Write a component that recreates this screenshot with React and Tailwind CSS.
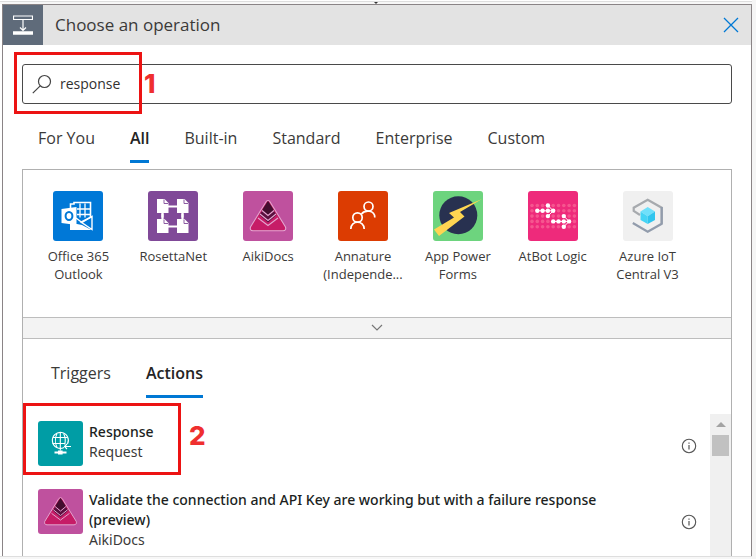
import React from "react";

function OutlookIcon() {
  return (
    <svg viewBox="0 0 50 50" className="size-full" aria-hidden="true">
      <rect width="50" height="50" fill="#0078d7" />
      <path d="M17.5 17V13h3.5v-1.5h16.5V26" fill="none" stroke="#fff" strokeWidth="1.6" />
      <path d="M24 18h13M24 23.5h13M27 12.5v14M32 12.5v14" stroke="#fff" strokeWidth="1.3" />
      <path d="M39 25.5v13L28 31z" fill="#0078d7" stroke="#fff" strokeWidth="1.4" />
      <path d="M17 33h7l5 1 9.500 5H17z" fill="#fff" />
      <path d="M23 27l6 4.500 10-6" fill="none" stroke="#fff" strokeWidth="1.400" />
      <path d="M8.500 18l15-2v18l-15-2z" fill="#fff" />
      <ellipse cx="16" cy="25" rx="3.400" ry="4" fill="none" stroke="#0078d7" strokeWidth="2" />
    </svg>
  );
}

function RosettaIcon() {
  return (
    <svg viewBox="0 0 50 50" className="size-full" aria-hidden="true">
      <rect width="50" height="50" fill="#804998" />
      <path d="M14.500 15.500h20v20h-20z" fill="none" stroke="#fff" strokeWidth="2.200" />
      {[[9, 8], [29, 8], [9, 28], [29, 28]].map(([x, y]) => (
        <g key={`${x}-${y}`}>
          <path d={`M${x} ${y}h7.500l4 4v10h-11.500z`} fill="#fff" />
          <path d={`M${x + 7} ${y + 0.5}v4h4`} fill="none" stroke="#804998" strokeWidth="0.9" />
        </g>
      ))}
      <path d="M14.500 22.500v4M34.500 22.500v4" stroke="#fff" strokeWidth="2.200" />
    </svg>
  );
}

function AikiIcon() {
  return (
    <svg viewBox="0 0 50 50" className="size-full" aria-hidden="true">
      <rect width="50" height="50" fill="#bf519e" />
      <path d="M23.200 10.500q1.800-2 3.600 0L42.500 36q1 3.500-2.500 3.800H10Q6.500 39.500 7.500 36z" fill="#c61c67" stroke="#e3a5cf" strokeWidth="1.100" />
      <path d="M25 10.300L33.500 24 25 31.500 16.500 24z" fill="#5b103f" />
      <path d="M25 10l5.500 8.500L25 23.500l-5.500-5z" fill="#430e2f" />
      <path d="M19 19.500l6 5 6-5M17 23l8 6.500 8-6.500M15 27l10 7.500L35 27" fill="none" stroke="#e3a5cf" strokeWidth="1.100" />
    </svg>
  );
}

function AnnatureIcon() {
  return (
    <svg viewBox="0 0 50 50" className="size-full" aria-hidden="true">
      <rect width="50" height="50" fill="#dc3c02" />
      <g fill="none" stroke="#fff" strokeWidth="1.700">
        <circle cx="30.500" cy="15.500" r="4.500" />
        <circle cx="19.500" cy="26.500" r="4.700" />
        <path d="M12.800 38c0-9 13.400-9 13.400 0M23.500 23c3-4 13.300-4.500 13.300 3.500" />
      </g>
    </svg>
  );
}

function PowerFormsIcon() {
  return (
    <svg viewBox="0 0 50 50" className="size-full" aria-hidden="true">
      <rect width="50" height="50" fill="#6dd47e" />
      <circle cx="25.300" cy="24.300" r="19" fill="#283150" />
      <path d="M49 8L16 22l5 4.500L1 38.500 6 45l25.500-19.500L27 21z" fill="#fed552" />
    </svg>
  );
}

const litDots = ["1-1", "2-1", "3-1", "4-1", "3-0", "3-2", "4-3", "5-3", "6-3", "7-3", "6-2", "6-4"];

function AtBotIcon() {
  const dots = [];
  for (let r = 0; r < 5; r++) for (let c = 0; c < 9; c++) dots.push([c, r]);
  return (
    <svg viewBox="0 0 50 50" className="size-full" aria-hidden="true">
      <rect width="50" height="50" fill="#ee2a7b" />
      {dots.map(([c, r]) => {
        const lit = litDots.includes(`${c}-${r}`);
        return (
          <circle key={`${c}-${r}`} cx={4 + c * 5.3} cy={14.5 + r * 5.3} r={lit ? 2.2 : 1.8} fill={lit ? "#fff" : "#f5568f"} />
        );
      })}
      <path d="M9.300 19.800h16M20 14.500l5.200 5.300-5.200 5.300M25.200 30.400h16M35.800 25.100l5.300 5.300-5.300 5.300" fill="none" stroke="#fff" strokeWidth="1" />
    </svg>
  );
}

function AzureIotIcon() {
  return (
    <svg viewBox="0 0 50 50" className="size-full" aria-hidden="true">
      <rect width="50" height="50" fill="#f0f0f0" />
      <path d="M17 24l-6.300-4v-3.300l14-8 14 8v16" fill="none" stroke="#a7aaae" strokeWidth="2.200" />
      <path d="M38.700 16v16.800l-14 8L9.800 32" fill="none" stroke="#929cac" strokeWidth="2.200" />
      <path d="M24.700 16l7.300 4.500-7.300 4.700-7.200-4.700z" fill="#6fe0fb" />
      <path d="M17.500 20.500l7.200 4.700V33l-7.200-4z" fill="#45d4f5" />
      <path d="M32 20.500l-7.300 4.700V33l7.300-4z" fill="#30c5ee" />
    </svg>
  );
}

function RequestIcon() {
  return (
    <svg viewBox="0 0 45 45" className="size-full" aria-hidden="true">
      <rect width="45" height="45" fill="#009da5" />
      <g fill="none" stroke="#fff" strokeWidth="1.100">
        <path d="M29.500 23A8 8 0 1 0 26 26.500" />
        <path d="M22.300 11.500v18M19 12.500c-2 4-2 10 0 14M25.600 12.500c2 4 2 8 1 11M15 16.500h14.500M14.500 22.500h13" />
        <path d="M33 25.500h-6.500M29 23l-2.500 2.500L29 28" />
        <path d="M16.500 31.500h12" strokeWidth="1.800" />
      </g>
      <path d="M20 29.500h4.600v4H20z" fill="#fff" />
    </svg>
  );
}

const categories = ["For You", "All", "Built-in", "Standard", "Enterprise", "Custom"];

const connectors = [
  ["Office 365 Outlook", OutlookIcon],
  ["RosettaNet", RosettaIcon],
  ["AikiDocs", AikiIcon],
  ["Annature (Independe...", AnnatureIcon],
  ["App Power Forms", PowerFormsIcon],
  ["AtBot Logic", AtBotIcon],
  ["Azure IoT Central V3", AzureIotIcon],
];

const actions = [
  ["Response", "Request", RequestIcon],
  ["Validate the connection and API Key are working but with a failure response (preview)", "AikiDocs", AikiIcon],
];

function Tab({ label, selected }) {
  return (
    <button
      type="button"
      role="tab"
      aria-selected={Boolean(selected)}
      className={
        selected
          ? "border-b-3 border-[#0078d4] pb-2 text-base leading-7 font-semibold whitespace-nowrap text-[#242424]"
          : "border-b-3 border-transparent pb-2 text-base leading-7 whitespace-nowrap text-[#3b3a39]"
      }
    >
      {label}
    </button>
  );
}

function ActionRow({ title, connector, Icon }) {
  return (
    <li className="flex gap-1.5 pt-[7px] pr-[13px] pb-4 pl-[15px]">
      <div className="size-[45px] shrink-0 overflow-hidden rounded-[3px]">
        <Icon />
      </div>
      <div className="flex-1 pt-px font-['Noto_Sans','Open_Sans',sans-serif] text-sm leading-5">
        <p className="max-w-[540px] font-medium text-[#201f1e]">{title}</p>
        <p className="text-[#3b3a39]">{connector}</p>
      </div>
      <button type="button" aria-label={`About ${title}`} className="mt-1 self-center">
        <svg viewBox="0 0 16 16" className="size-4" fill="none" stroke="#555" aria-hidden="true">
          <circle cx="8" cy="8" r="6.700" strokeWidth="1.100" />
          <path d="M8 7v4.500M8 4.500v1.200" strokeWidth="1.200" />
        </svg>
      </button>
    </li>
  );
}

export default function App() {
  return (
    <div className="flex h-screen flex-col border-r-4 border-[#f5f5f5] bg-white pt-px font-['Open_Sans','Noto_Sans',sans-serif]">
      <div className="flex h-[3px] justify-center border-t border-[#dedede] bg-[#f7f7f7]">
        <svg viewBox="0 0 4 2" className="h-0.5 w-1" aria-hidden="true">
          <path d="M0 0h4L2 2z" fill="#333" />
        </svg>
      </div>
      <main className="ml-0.5 flex min-h-0 flex-1 flex-col border-x border-t border-[#8a8486]">
        <header className="flex h-10 shrink-0 items-center bg-[#e3e3e3]">
          <div className="flex size-10 items-center justify-center bg-[#5f6b7a]">
            <svg viewBox="0 0 20 20" className="size-5" fill="none" stroke="#fff" aria-hidden="true">
              <path d="M.5 1h19v3.500H.5zM10 5v10M7 12.500l3 3 3-3" strokeWidth="1.200" />
              <path d="M0 18h20" strokeWidth="3.500" />
            </svg>
          </div>
          <h1 className="ml-3 flex-1 text-[17px] text-[#3b3a39]">Choose an operation</h1>
          <button type="button" aria-label="Close" className="mr-3">
            <svg viewBox="0 0 16 16" className="size-4" stroke="#0078d4" strokeWidth="1.300" aria-hidden="true">
              <path d="M1 1l14 14M15 1L1 15" />
            </svg>
          </button>
        </header>

        <div className="flex min-h-0 flex-1 flex-col px-[19px] pt-[19px]">
          <div className="relative shrink-0">
            <label className="flex h-10 items-center gap-2 rounded-[3px] border border-[#4a4a4a] pl-[9px]">
              <svg viewBox="0 0 20 20" className="size-5" fill="none" stroke="#444" strokeWidth="1.200" aria-hidden="true">
                <circle cx="12.500" cy="7.500" r="6" />
                <path d="M8.200 11.800L.8 19.200" />
              </svg>
              <input
                type="text"
                aria-label="Search connectors and actions"
                defaultValue="response"
                className="min-w-0 flex-1 text-sm text-[#323130] outline-none"
              />
            </label>
            <div className="pointer-events-none absolute -top-3 -left-2 h-[62px] w-32 border-3 border-[#ec1313]" />
            <span className="pointer-events-none absolute top-1 left-[122px] font-[Inter,sans-serif] text-[26px] leading-8 font-extrabold text-[#ef2f2f]">1</span>
          </div>

          <div role="tablist" aria-label="Connector categories" className="mt-5 flex shrink-0 gap-[35px] pl-4">
            {categories.map((c) => (
              <Tab key={c} label={c} selected={c === "All"} />
            ))}
          </div>

          <section className="mt-1.5 flex min-h-0 flex-1 flex-col border-x border-t border-[#b0b0b0]">
            <ul className="grid h-[147px] shrink-0 grid-cols-7 pt-[21px] pr-9 pl-2">
              {connectors.map(([name, Icon]) => (
                <li key={name}>
                  <button type="button" className="flex w-full flex-col items-center">
                    <span className="block size-[50px] overflow-hidden rounded-[3px]">
                      <Icon />
                    </span>
                    <span className="mt-1.5 w-[84px] text-[13px] leading-[18px] text-[#3b3a39]">{name}</span>
                  </button>
                </li>
              ))}
            </ul>
            <button
              type="button"
              aria-label="Show more connectors"
              className="flex h-[22px] shrink-0 items-center justify-center border-y border-[#bdbdbd] bg-[#f3f3f3]"
            >
              <svg viewBox="0 0 12 8" className="h-2 w-3" fill="none" stroke="#777" strokeWidth="1.200" aria-hidden="true">
                <path d="M1 1l5 5 5-5" />
              </svg>
            </button>

            <div role="tablist" aria-label="Operation types" className="mt-5 flex shrink-0 gap-[35px] pl-7">
              <Tab label="Triggers" />
              <Tab label="Actions" selected />
            </div>

            <div className="relative mt-4 flex min-h-0 flex-1">
              <ul className="min-w-0 flex-1 overflow-hidden">
                {actions.map(([title, connector, Icon]) => (
                  <ActionRow key={title} title={title} connector={connector} Icon={Icon} />
                ))}
              </ul>
              <div className="flex w-[21px] flex-col items-center bg-[#f0f0f0]">
                <svg viewBox="0 0 10 5" className="my-2 h-[5px] w-2.5" aria-hidden="true">
                  <path d="M0 5L5 0l5 5z" fill="#a3a3a3" />
                </svg>
                <div className="h-[21px] w-[17px] bg-[#c1c1c1]" />
              </div>
              <div className="pointer-events-none absolute -top-[11px] left-0 h-[72px] w-[158px] border-3 border-[#ec1313]" />
              <span className="pointer-events-none absolute top-1.5 left-[166px] font-[Inter,sans-serif] text-[26px] leading-8 font-extrabold text-[#ef2f2f]">2</span>
            </div>
          </section>
        </div>
      </main>
      <div className="h-[3px] shrink-0 border-t border-[#dedede] bg-[#f7f7f7]" />
    </div>
  );
}
